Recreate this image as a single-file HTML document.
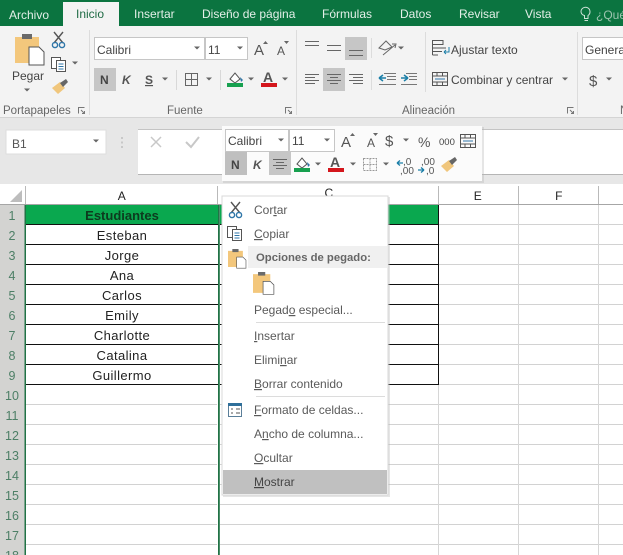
<!DOCTYPE html>
<html><head><meta charset="utf-8">
<style>
html,body{margin:0;padding:0;background:#fff;overflow:hidden}
svg{display:block;font-family:"Liberation Sans",sans-serif;filter:blur(.3px)}
text{fill:#444;font-size:12px}
.tab{fill:#e3efe8;font-size:12px}
.c{text-anchor:middle;fill:#222;font-size:13px;letter-spacing:.4px}
.r{text-anchor:middle;fill:#4d7f66;font-size:12.5px}
.m{fill:#5a5a5a;font-size:12px}
.u{text-decoration:underline}
.g{fill:#666;font-size:11.5px}
</style></head><body>
<svg width="623" height="555" viewBox="0 0 623 555" xmlns="http://www.w3.org/2000/svg">
<defs>
<g id="arr"><path d="M-3 -1.5H3L0 1.5Z" fill="#666"/></g>
<g id="paste">
<rect x="0" y="3" width="24" height="26" fill="#f3c77c"/>
<rect x="7" y="0" width="10" height="5" fill="#6a6a6a"/>
<path d="M14 13H24L29 18V31H14Z" fill="#fff" stroke="#555"/>
</g>
<g id="scis" fill="none" stroke-width="1.4">
<path d="M2 0L11 11M11 0L2 11" stroke="#555"/>
<circle cx="3" cy="13" r="2.6" stroke="#2f76a8"/><circle cx="10" cy="13" r="2.6" stroke="#2f76a8"/>
</g>
<g id="copy" fill="#fff" stroke="#555">
<rect x="0.5" y="0.5" width="9" height="11"/>
<rect x="5.5" y="3.5" width="9" height="11"/>
<path d="M7.5 7H12.5M7.5 9.500H12.500M7.5 12H12.500" stroke="#2f76a8"/>
</g>
<g id="brush">
<path d="M0 9L8 3L13 9L6 15Z" fill="#f0c67c"/>
<path d="M8 4L14 0L16 3L11 8Z" fill="#666"/>
</g>
<g id="fill">
<path d="M3 8L8 2L13 8L8 12Z" fill="#fff" stroke="#555"/>
<path d="M13 6L16 9L14 11Z" fill="#2f76a8"/>
<rect x="0" y="12" width="16" height="4" fill="#17a04f"/>
</g>
<g id="fc">
<text x="2" y="11" style="font-size:14px;font-weight:bold;fill:#555">A</text>
<rect x="0" y="12" width="16" height="4" fill="#d4161c"/>
</g>
<g id="merge" fill="none" stroke="#555">
<rect x="0.500" y="0.500" width="15" height="13"/>
<path d="M0.500 4H15.500M0.500 10H15.500M5 0.500V4M10.500 0.500V4M5 10V13.500M10.500 10V13.500"/>
<path d="M3 7H13" stroke="#2f76a8"/>
</g>
<g id="ac" stroke="#666"><path d="M0 .5H14M3 3.500H11M0 6.500H14M3 9.500H11"/></g>
<g id="al" stroke="#666"><path d="M0 .5H14M0 3.500H10M0 6.500H14M0 9.500H10"/></g>
<g id="ar" stroke="#666"><path d="M0 .5H14M4 3.500H14M0 6.500H14M4 9.500H14"/></g>
<g id="launch" fill="none" stroke="#777"><path d="M.5 6.500V.5H6.500"/><path d="M3 3L6.500 6.500M6.500 4V6.500H4"/></g>
<g id="dec1"><text x="6" y="7" style="font-size:10px;fill:#555">,0</text><text x="3" y="16" style="font-size:10px;fill:#555">,00</text><path d="M0 5H6M0 5L3 2.500M0 5L3 7.500" stroke="#1c7fa8" fill="none" stroke-width="1.300"/></g>
<g id="dec2"><text x="3" y="7" style="font-size:10px;fill:#555">,00</text><text x="8" y="16" style="font-size:10px;fill:#555">,0</text><path d="M0 12H6M6 12L3 9.500M6 12L3 14.500" stroke="#1c7fa8" fill="none" stroke-width="1.300"/></g>
</defs>

<!-- backgrounds -->
<rect width="623" height="555" fill="#fff"/>
<rect width="623" height="26" fill="#0b7440"/>
<rect y="26" width="623" height="92" fill="#f3f3f3"/>
<rect y="117" width="623" height="1" fill="#d4d4d4"/>
<rect y="118" width="623" height="66" fill="#e7e7e7"/>
<rect x="63" y="2" width="56" height="24" fill="#f3f3f3"/>

<!-- tabs -->
<text x="9" y="19" class="tab">Archivo</text>
<text x="76" y="18" style="fill:#1f6b45">Inicio</text>
<text x="134" y="18" class="tab">Insertar</text>
<text x="202" y="18" class="tab">Diseño de página</text>
<text x="322" y="18" class="tab">Fórmulas</text>
<text x="400" y="18" class="tab">Datos</text>
<text x="459" y="18" class="tab">Revisar</text>
<text x="525" y="18" class="tab">Vista</text>
<path d="M581 12a4.500 4.500 0 1 1 7 3.500v3h-3.500v-3a4.500 4.500 0 0 1-3.500-3.500M584.500 20.500h3.500" fill="none" stroke="#cfe3d8"/>
<text x="596" y="19" style="fill:#9cc4af">¿Qué</text>

<!-- clipboard group -->
<use href="#paste" x="15" y="34"/>
<text x="12" y="80">Pegar</text>
<use href="#arr" x="27" y="90"/>
<use href="#scis" x="52" y="32"/>
<use href="#copy" x="51" y="57"/>
<use href="#arr" x="75" y="63"/>
<use href="#brush" x="52" y="79"/>
<text x="3" y="114" class="g">Portapapeles</text>
<use href="#launch" x="78" y="107"/>
<rect x="89" y="30" width="1" height="85" fill="#dcdcdc"/>

<!-- font group -->
<rect x="94.500" y="37.500" width="110" height="22" fill="#fff" stroke="#c6c6c6"/>
<rect x="205.500" y="37.500" width="42" height="22" fill="#fff" stroke="#c6c6c6"/>
<text x="97" y="54">Calibri</text><use href="#arr" x="197" y="48"/>
<text x="208" y="54">11</text><use href="#arr" x="240" y="48"/>
<text x="254" y="55" style="font-size:15px;fill:#555">A</text><path d="M263 44h5l-2.500-3z" fill="#666"/>
<text x="277" y="55" style="font-size:12px;fill:#555">A</text><path d="M284 41h5l-2.500 3z" fill="#666"/>
<rect x="94" y="68" width="22" height="23" fill="#c6c6c6"/>
<text x="100" y="84" style="font-weight:bold;fill:#444">N</text>
<text x="122" y="84" style="font-weight:bold;font-style:italic;fill:#555">K</text>
<text x="145" y="84" class="u" style="font-weight:bold;fill:#555">S</text>
<use href="#arr" x="165" y="79"/>
<rect x="176" y="70" width="1" height="20" fill="#d8d8d8"/>
<path d="M185.500 73.500H197.500V85.500H185.500ZM191.500 73.500V85.500M185.500 79.500H197.500" fill="none" stroke="#666"/>
<use href="#arr" x="209" y="79"/>
<rect x="220" y="70" width="1" height="20" fill="#d8d8d8"/>
<use href="#fill" x="227" y="71"/><use href="#arr" x="251" y="79"/>
<use href="#fc" x="261" y="71"/><use href="#arr" x="285" y="79"/>
<text x="167" y="114" class="g">Fuente</text>
<use href="#launch" x="285" y="107"/>
<rect x="296" y="30" width="1" height="85" fill="#dcdcdc"/>

<!-- alignment -->
<path d="M305 41.500H319M305 45.500H319" stroke="#666"/>
<path d="M327 45.500H341M327 50.500H341" stroke="#666"/>
<rect x="345" y="37" width="22" height="23" fill="#c6c6c6"/>
<path d="M349 50.500H363M349 55.500H363" stroke="#666"/>
<path d="M379 48L386 41L392 47L385 50ZM383 55L395 45M392 44L396 44L395 48" fill="none" stroke="#666"/>
<use href="#arr" x="401" y="48"/>
<rect x="371" y="38" width="1" height="20" fill="#dcdcdc"/>
<use href="#al" x="305" y="74"/>
<rect x="323" y="68" width="22" height="23" fill="#c6c6c6"/>
<use href="#ac" x="327" y="74"/>
<use href="#ar" x="349" y="74"/>
<rect x="371" y="70" width="1" height="20" fill="#dcdcdc"/>
<path d="M384 73.500H396M387 76.500H396M387 79.500H396M379 84.500H396" stroke="#777"/><path d="M379 78H386M379 78L383 75M379 78L383 81" stroke="#1c7fa8" fill="none" stroke-width="1.500"/>
<path d="M406 73.500H417M409 76.500H417M409 79.500H417M401 84.500H417" stroke="#777"/><path d="M401 78H408M408 78L404 75M408 78L404 81" stroke="#1c7fa8" fill="none" stroke-width="1.500"/>
<rect x="425" y="32" width="1" height="60" fill="#dcdcdc"/>
<path d="M432.500 40.500H443V44.500H432.500ZM432.500 48H446M432.500 51.500H442M432.500 55H438M432.500 44.500V55" fill="none" stroke="#555"/><path d="M444 52H449V47M444 52L446 50M444 52L446 54" fill="none" stroke="#1c7fa8"/>
<text x="451" y="54">Ajustar texto</text>
<use href="#merge" x="432" y="72"/>
<text x="451" y="84">Combinar y centrar</text>
<use href="#arr" x="565" y="79"/>
<text x="402" y="114" class="g">Alineación</text>
<use href="#launch" x="567" y="107"/>
<rect x="577" y="32" width="1" height="83" fill="#dcdcdc"/>

<!-- number -->
<rect x="582.500" y="37.500" width="60" height="22" fill="#fff" stroke="#c6c6c6"/>
<text x="585" y="54">General</text>
<text x="589" y="86" style="font-size:15px;fill:#555">$</text>
<use href="#arr" x="609" y="79"/>
<text x="620" y="114" class="g">N</text>

<!-- formula bar -->
<rect x="6" y="130" width="100" height="24" fill="#fff" stroke="#dedede"/>
<text x="12" y="148" style="fill:#555">B1</text>
<use href="#arr" x="96" y="141"/>
<path d="M122 137v2M122 141.500v2M122 146v2" stroke="#aaa"/>
<rect x="138" y="129" width="485" height="45" fill="#fff"/>
<path d="M138 129.500H623" stroke="#c4c4c4"/>
<path d="M138 174.500H623" stroke="#b5b5b5"/>
<path d="M151 137L161 147M161 137L151 147" stroke="#c8c8c8" stroke-width="1.500"/>
<path d="M186 142L191 147L199 137" fill="none" stroke="#c8c8c8" stroke-width="2"/>

<!-- column headers -->
<path d="M10 202H22V190Z" fill="#bdbdbd"/>
<rect y="204" width="623" height="1" fill="#a6a6a6"/>
<path d="M25.500 186V204M217.500 186V204M438.500 186V204M518.500 186V204M598.500 186V204" stroke="#b9b9b9"/>
<text x="122" y="200" class="c" style="font-size:12px">A</text>
<text x="329" y="197" class="c" style="font-size:12px">C</text>
<text x="478" y="200" class="c" style="font-size:12px">E</text>
<text x="559" y="200" class="c" style="font-size:12px">F</text>

<!-- row header -->
<rect x="0" y="205" width="25" height="350" fill="#d3d3d1"/>
<text x="12" y="220" class="r">1</text><text x="12" y="240" class="r">2</text><text x="12" y="260" class="r">3</text>
<text x="12" y="280" class="r">4</text><text x="12" y="300" class="r">5</text><text x="12" y="320" class="r">6</text>
<text x="12" y="340" class="r">7</text><text x="12" y="360" class="r">8</text><text x="12" y="380" class="r">9</text>
<text x="12" y="400" class="r">10</text><text x="12" y="420" class="r">11</text><text x="12" y="440" class="r">12</text>
<text x="12" y="460" class="r">13</text><text x="12" y="480" class="r">14</text><text x="12" y="500" class="r">15</text>
<text x="12" y="520" class="r">16</text><text x="12" y="540" class="r">17</text><text x="12" y="560" class="r">18</text>

<!-- grid -->
<path d="M26 404.500H217M26 424.500H217M26 444.500H217M26 464.500H217M26 484.500H217M26 504.500H217M26 524.500H217M26 544.500H217M220 404.500H623M220 424.500H623M220 444.500H623M220 464.500H623M220 484.500H623M220 504.500H623M220 524.500H623M220 544.500H623M439 224.500H623M439 244.500H623M439 264.500H623M439 284.500H623M439 304.500H623M439 324.500H623M439 344.500H623M439 364.500H623M439 384.500H623" stroke="#d2d2d2"/>
<path d="M438.500 384V555M518.500 205V555M598.500 205V555" stroke="#d6d6d6"/>
<rect x="26" y="205" width="192" height="19" fill="#0aa84f"/>
<rect x="220" y="205" width="218" height="19" fill="#0aa84f"/>
<path d="M26 224.500H218M26 244.500H218M26 264.500H218M26 284.500H218M26 304.500H218M26 324.500H218M26 344.500H218M26 364.500H218M26 384.500H218M220 224.500H438M220 244.500H438M220 264.500H438M220 284.500H438M220 304.500H438M220 324.500H438M220 344.500H438M220 364.500H438M220 384.500H438M438.500 205V385" stroke="#111"/>
<rect x="24.500" y="205" width="1.500" height="350" fill="#217346"/>
<rect x="218" y="205" width="1.800" height="350" fill="#217346"/>

<text x="122" y="220" class="c" style="font-weight:bold;fill:#0d3a1e;letter-spacing:0">Estudiantes</text>
<text x="122" y="240" class="c">Esteban</text>
<text x="122" y="260" class="c">Jorge</text>
<text x="122" y="280" class="c">Ana</text>
<text x="122" y="300" class="c">Carlos</text>
<text x="122" y="320" class="c">Emily</text>
<text x="122" y="340" class="c">Charlotte</text>
<text x="122" y="360" class="c">Catalina</text>
<text x="122" y="380" class="c">Guillermo</text>

<!-- context menu -->
<rect x="223" y="197" width="167" height="300" fill="#b4b4b4" opacity=".35"/>
<rect x="222" y="196" width="166" height="299" fill="#fff" stroke="#d8d8d8"/>
<use href="#scis" x="229" y="202"/>
<text x="254" y="214" class="m">Cor<tspan class="u">t</tspan>ar</text>
<use href="#copy" x="227" y="226"/>
<text x="254" y="238" class="m"><tspan class="u">C</tspan>opiar</text>
<rect x="248" y="246" width="139" height="22" fill="#f0f0f0"/>
<g transform="translate(228,249) scale(.62)"><use href="#paste"/></g>
<text x="256" y="261" style="font-weight:bold;fill:#666;font-size:11.3px">Opciones de pegado:</text>
<g transform="translate(253,272) scale(.72)"><use href="#paste"/></g>
<text x="254" y="314" class="m">Pegad<tspan class="u">o</tspan> especial...</text>
<path d="M256 322.500H385" stroke="#dcdcdc"/>
<text x="254" y="340" class="m"><tspan class="u">I</tspan>nsertar</text>
<text x="254" y="364" class="m">Elimi<tspan class="u">n</tspan>ar</text>
<text x="254" y="388" class="m"><tspan class="u">B</tspan>orrar contenido</text>
<path d="M256 396.500H385" stroke="#dcdcdc"/>
<rect x="228.500" y="403.500" width="13" height="13" fill="#fff" stroke="#5b7f99"/>
<rect x="228" y="403" width="14" height="3" fill="#2f6f9a"/>
<path d="M231 409h2M236 409h4M231 413h2M236 413h4" stroke="#555"/>
<text x="254" y="414" class="m"><tspan class="u">F</tspan>ormato de celdas...</text>
<text x="254" y="438" class="m">A<tspan class="u">n</tspan>cho de columna...</text>
<text x="254" y="462" class="m"><tspan class="u">O</tspan>cultar</text>
<rect x="223" y="470" width="164" height="24" fill="#c0c0c0"/>
<text x="254" y="486" style="fill:#444"><tspan class="u">M</tspan>ostrar</text>

<!-- mini toolbar -->
<rect x="223" y="127" width="261" height="56" fill="#b4b4b4" opacity=".35"/>
<rect x="222" y="126" width="260" height="55" fill="#fbfbfb"/>
<rect x="225.500" y="129.500" width="63" height="22" fill="#fff" stroke="#c6c6c6"/>
<rect x="289.500" y="129.500" width="45" height="22" fill="#fff" stroke="#c6c6c6"/>
<text x="228" y="145">Calibri</text><use href="#arr" x="281" y="140"/>
<text x="292" y="145">11</text><use href="#arr" x="327" y="140"/>
<text x="341" y="147" style="font-size:15px;fill:#555">A</text><path d="M350 136h5l-2.500-3z" fill="#666"/>
<text x="367" y="147" style="font-size:12px;fill:#555">A</text><path d="M373 133h5l-2.500 3z" fill="#666"/>
<text x="385" y="146" style="font-size:15px;fill:#555">$</text><use href="#arr" x="406" y="140"/>
<text x="418" y="147" style="font-size:14px;fill:#555">%</text>
<text x="439" y="145" style="font-size:9.500px;fill:#444">000</text>
<use href="#merge" x="460" y="134"/>
<rect x="225" y="152" width="22" height="23" fill="#bfbfbf"/>
<text x="231" y="169" style="font-weight:bold">N</text>
<text x="253" y="169" style="font-weight:bold;font-style:italic;fill:#555">K</text>
<rect x="269" y="152" width="22" height="23" fill="#c6c6c6"/>
<use href="#ac" x="273" y="159"/>
<use href="#fill" x="294" y="156"/><use href="#arr" x="318" y="164"/>
<use href="#fc" x="328" y="156"/><use href="#arr" x="353" y="164"/>
<path d="M363.500 158.500H376.500V170.500H363.500ZM370 158.500V170.500M363.500 164.500H376.500" fill="none" stroke="#999" stroke-dasharray="2 1"/>
<use href="#arr" x="386" y="164"/>
<use href="#dec1" x="397" y="158"/>
<use href="#dec2" x="418" y="158"/>
<use href="#brush" x="441" y="157"/>
</svg>
</body></html>
